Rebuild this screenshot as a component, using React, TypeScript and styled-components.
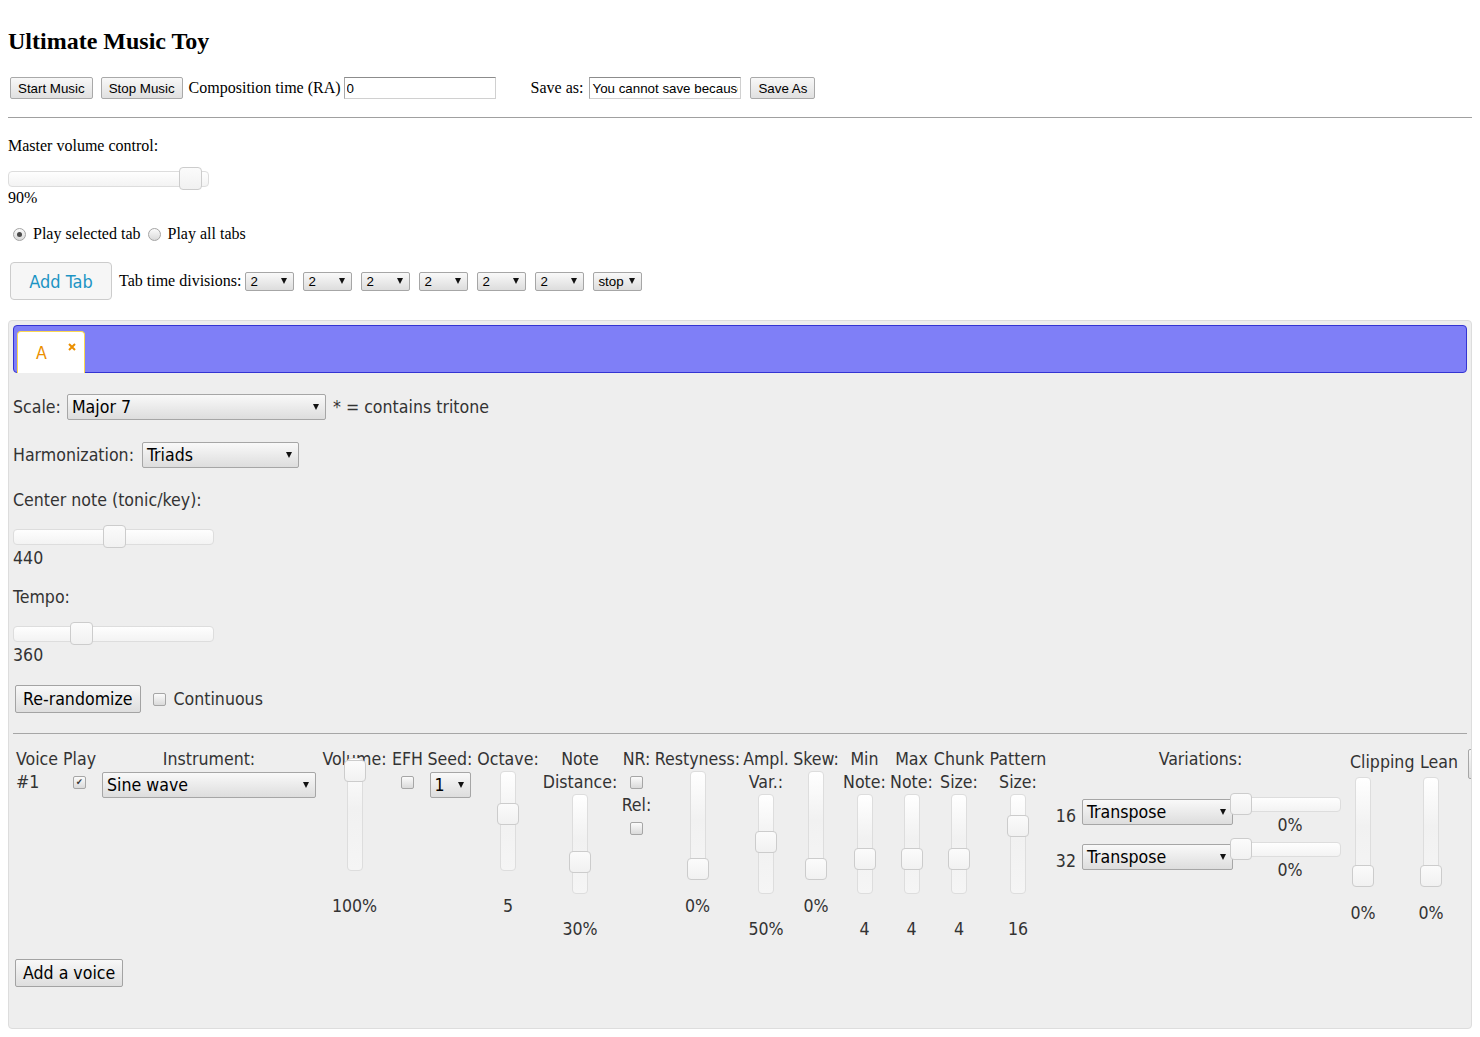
import React from "react";
import styled, { createGlobalStyle } from "styled-components";

const uiFont = `"DejaVu Sans Condensed", "DejaVu Sans", sans-serif`;
const sysFont = `"Liberation Sans", Arial, sans-serif`;

const GlobalStyle = createGlobalStyle`
  * { box-sizing: border-box; }
  body {
    margin: 0;
    background: #ffffff;
    color: #000000;
    font-family: "Liberation Serif", "Times New Roman", serif;
    font-size: 16px;
  }
`;

const Page = styled.div`
  padding: 27px 8px 8px;
`;

const Title = styled.h2`
  margin: 0;
  font-size: 24px;
  line-height: 28px;
  font-weight: bold;
`;

const Bar = styled.div<{ $mt: number; $h: number }>`
  display: flex;
  align-items: center;
  margin-top: ${(p) => p.$mt}px;
  height: ${(p) => p.$h}px;
  white-space: nowrap;
`;

const Text = styled.span<{ $ml?: number }>`
  margin-left: ${(p) => p.$ml ?? 0}px;
  flex-shrink: 0;
`;

const Line = styled.div<{ $mt?: number; $lh?: number }>`
  margin-top: ${(p) => p.$mt ?? 0}px;
  line-height: ${(p) => p.$lh ?? 23}px;
  white-space: nowrap;
`;

const SysButton = styled.button<{ $ml?: number }>`
  margin-left: ${(p) => p.$ml ?? 0}px;
  height: 22px;
  padding: 0 7px;
  font-family: ${sysFont};
  font-size: 13.33px;
  color: #000;
  background: linear-gradient(#f8f8f8, #e0e0e0);
  border: 1px solid #a9a9a9;
  border-radius: 2px;
  flex-shrink: 0;
`;

const TextBox = styled.input<{ $ml?: number }>`
  margin-left: ${(p) => p.$ml ?? 0}px;
  width: 152px;
  height: 22px;
  padding: 0 2px;
  font-family: ${sysFont};
  font-size: 13.33px;
  color: #000;
  background: #fff;
  border: 1px solid #d0d0d0;
  border-top-color: #8c8c8c;
  border-left-color: #a8a8a8;
  flex-shrink: 0;
`;

const Rule = styled.div<{ $mt: number }>`
  margin-top: ${(p) => p.$mt}px;
  height: 1px;
  background: #a0a0a0;
`;

const Radio = styled.span<{ $on?: boolean; $ml?: number }>`
  position: relative;
  display: inline-block;
  margin-left: ${(p) => p.$ml ?? 0}px;
  width: 13px;
  height: 13px;
  border-radius: 50%;
  border: 1px solid #a4a4a4;
  background: linear-gradient(#fbfbfb, #d9d9d9);
  flex-shrink: 0;
  &::after {
    content: "";
    display: ${(p) => (p.$on ? "block" : "none")};
    position: absolute;
    left: 3px;
    top: 3px;
    width: 5px;
    height: 5px;
    border-radius: 50%;
    background: #4a4a4a;
  }
`;

const Check = styled.span<{ $ml?: number }>`
  display: inline-flex;
  align-items: center;
  justify-content: center;
  margin-left: ${(p) => p.$ml ?? 0}px;
  width: 13px;
  height: 13px;
  border: 1px solid #a6a6a6;
  border-radius: 2px;
  background: linear-gradient(#fbfbfb, #dadada);
  font-family: "DejaVu Sans", sans-serif;
  font-size: 9px;
  line-height: 1;
  color: #333;
  vertical-align: middle;
  flex-shrink: 0;
`;

const Dropdown = styled.div<{
  $w: number;
  $h: number;
  $fs: number;
  $font: string;
  $ml?: number;
  $mt?: number;
}>`
  display: flex;
  align-items: center;
  justify-content: space-between;
  width: ${(p) => p.$w}px;
  height: ${(p) => p.$h}px;
  margin-left: ${(p) => p.$ml ?? 0}px;
  margin-top: ${(p) => p.$mt ?? 0}px;
  padding: 0 6px 0 4px;
  font-family: ${(p) => p.$font};
  font-size: ${(p) => p.$fs}px;
  color: #000;
  border: 1px solid #a6a6a6;
  border-radius: 2px;
  background: linear-gradient(#f9f9f9, #dddddd);
  white-space: nowrap;
  overflow: hidden;
  flex-shrink: 0;
  &::after {
    content: "";
    flex-shrink: 0;
    border-left: 3.5px solid transparent;
    border-right: 3.5px solid transparent;
    border-top: 6px solid #111;
  }
`;

const HTrack = styled.div<{ $w: number; $h: number; $mt?: number; $ml?: number }>`
  position: relative;
  width: ${(p) => p.$w}px;
  height: ${(p) => p.$h}px;
  margin-top: ${(p) => p.$mt ?? 0}px;
  margin-left: ${(p) => p.$ml ?? 0}px;
  border: 1px solid #dddddd;
  border-radius: 4px;
  background: linear-gradient(#fefefe, #f3f3f3);
  flex-shrink: 0;
`;

const VTrack = styled.div<{ $h: number; $mt: number }>`
  position: relative;
  width: 16px;
  height: ${(p) => p.$h}px;
  margin-top: ${(p) => p.$mt}px;
  border: 1px solid #dddddd;
  border-radius: 4px;
  background: linear-gradient(#ffffff, #f1f1f1 45%, #f5f5f5);
  flex-shrink: 0;
`;

const Knob = styled.span<{ $x: number; $y: number; $size: number }>`
  position: absolute;
  left: ${(p) => p.$x}px;
  top: ${(p) => p.$y}px;
  width: ${(p) => p.$size}px;
  height: ${(p) => p.$size}px;
  border: 1px solid #cccccc;
  border-radius: 4px;
  background: linear-gradient(#fbfbfb, #f1f1f1);
`;

const AddTabButton = styled.button`
  margin-left: 2px;
  width: 102px;
  height: 38px;
  font-family: ${uiFont};
  font-stretch: condensed;
  font-size: 18px;
  color: #1c94c4;
  background: #f6f6f6;
  border: 1px solid #cccccc;
  border-radius: 4px;
  flex-shrink: 0;
`;

const Tabs = styled.div`
  margin-top: 20px;
  padding: 4px 4px 41px;
  border: 1px solid #dddddd;
  border-radius: 4px;
  background: #eeeeee;
  color: #333333;
  font-family: ${uiFont};
  font-stretch: condensed;
  font-size: 17.6px;
  overflow: hidden;
`;

const TabNav = styled.div`
  display: flex;
  height: 48px;
  padding: 5px 3px 0;
  border: 1px solid #3434d2;
  border-radius: 4px;
  background: #7f7ff7;
`;

const Tab = styled.div`
  display: flex;
  align-items: center;
  width: 68px;
  height: 42px;
  padding-left: 18px;
  border: 1px solid #fbd850;
  border-bottom: 0;
  border-radius: 4px 4px 0 0;
  background: #ffffff;
  color: #eb8f00;
`;

const CloseIcon = styled.svg`
  margin-left: 21px;
  margin-bottom: 12px;
`;

const Row = styled.div<{ $mt: number; $h?: number }>`
  display: flex;
  align-items: center;
  margin-top: ${(p) => p.$mt}px;
  min-height: ${(p) => p.$h ?? 23}px;
  white-space: nowrap;
`;

const UiButton = styled.button<{ $ml?: number; $mt?: number }>`
  margin-left: ${(p) => p.$ml ?? 2}px;
  margin-top: ${(p) => p.$mt ?? 0}px;
  height: 28px;
  padding: 0 7px;
  font-family: ${uiFont};
  font-stretch: condensed;
  font-size: 17.6px;
  color: #000;
  border: 1px solid #a3a3a3;
  border-radius: 2px;
  background: linear-gradient(#f8f8f8, #dedede);
  flex-shrink: 0;
  white-space: nowrap;
`;

const PanelRule = styled.div`
  margin-top: 20px;
  height: 1px;
  background: #a6a6a6;
`;

const VoiceRow = styled.div`
  display: flex;
  align-items: flex-start;
  gap: 4px;
  margin-top: 14px;
  padding-left: 3px;
`;

const Col = styled.div<{ $w: number; $align?: string; $pt?: number }>`
  display: flex;
  flex-direction: column;
  align-items: ${(p) => p.$align ?? "center"};
  width: ${(p) => p.$w}px;
  padding-top: ${(p) => p.$pt ?? 0}px;
  flex-shrink: 0;
  text-align: center;
`;

const Stack = styled.div<{ $w?: number; $ml?: number }>`
  display: flex;
  flex-direction: column;
  align-items: center;
  width: ${(p) => (p.$w ? `${p.$w}px` : "100%")};
  margin-left: ${(p) => p.$ml ?? 0}px;
`;

const CheckLine = styled.div`
  display: flex;
  align-items: center;
  justify-content: center;
  height: 23px;
`;

const VarList = styled.div`
  display: flex;
  flex-direction: column;
  width: 100%;
  margin-top: 22px;
`;

const VarRow = styled.div`
  display: flex;
  align-items: flex-start;
  height: 45px;
`;

const VarNum = styled.div`
  width: 24px;
  padding-right: 3px;
  margin-top: 11.5px;
  line-height: 23px;
  text-align: right;
  flex-shrink: 0;
`;

const VarSlider = styled.div`
  display: flex;
  flex-direction: column;
  width: 112px;
  margin-left: -3px;
  flex-shrink: 0;
`;

const VarValue = styled.div`
  margin-top: 1.5px;
  padding-left: 8px;
  line-height: 23px;
  text-align: center;
`;

const EdgeButton = styled.button`
  margin-left: 4px;
  margin-top: 1px;
  width: 60px;
  height: 30px;
  border: 1px solid #a6a6a6;
  border-radius: 2px;
  background: linear-gradient(#f8f8f8, #dedede);
  flex-shrink: 0;
`;

const ROW_TOP = 748;

type SliderProps = {
  w: number;
  label: string[];
  top: number;
  h: number;
  knob: number;
  value: string;
  vy: number;
  pt?: number;
  stackW?: number;
  stackMl?: number;
};

const SliderCell = ({ w, label, top, h, knob, value, vy, pt = 0, stackW, stackMl }: SliderProps) => (
  <Col $w={w} $pt={pt} $align={stackW ? "flex-start" : "center"}>
    {label.map((l) => (
      <Line key={l}>{l}</Line>
    ))}
    <Stack $w={stackW} $ml={stackMl}>
      <VTrack $h={h} $mt={top - ROW_TOP - pt - 23 * label.length}>
        <Knob $x={-4} $y={knob - top - 1} $size={22} />
      </VTrack>
      <Line $mt={vy - 11.5 - top - h}>{value}</Line>
    </Stack>
  </Col>
);

const Variation = ({ n }: { n: string }) => (
  <VarRow>
    <VarNum>{n}</VarNum>
    <Dropdown $w={151} $h={26} $fs={17.6} $font={uiFont} $ml={3} $mt={6}>
      Transpose
    </Dropdown>
    <VarSlider>
      <HTrack $w={109} $h={15} $mt={4} $ml={2}>
        <Knob $x={-3} $y={-5} $size={22} />
      </HTrack>
      <VarValue>0%</VarValue>
    </VarSlider>
  </VarRow>
);

const divisions = ["2", "2", "2", "2", "2", "2", "stop"];

export default function App() {
  return (
    <Page>
      <GlobalStyle />
      <Title>Ultimate Music Toy</Title>

      <Bar $mt={22} $h={22}>
        <SysButton $ml={2}>Start Music</SysButton>
        <SysButton $ml={8}>Stop Music</SysButton>
        <Text $ml={6}>Composition time (RA)</Text>
        <TextBox $ml={3} defaultValue="0" />
        <Text $ml={35}>Save as:</Text>
        <TextBox $ml={6} defaultValue="You cannot save because you are not logged in" />
        <SysButton $ml={9}>Save As</SysButton>
      </Bar>

      <Rule $mt={18} />

      <Line $mt={19} $lh={18}>
        Master volume control:
      </Line>
      <HTrack $w={201} $h={16} $mt={16}>
        <Knob $x={170} $y={-5} $size={23} />
      </HTrack>
      <Line $mt={2} $lh={18}>
        90%
      </Line>

      <Bar $mt={18} $h={18}>
        <Radio $on $ml={5} />
        <Text $ml={7}>Play selected tab</Text>
        <Radio $ml={7} />
        <Text $ml={7}>Play all tabs</Text>
      </Bar>

      <Bar $mt={19} $h={38}>
        <AddTabButton>Add Tab</AddTabButton>
        <Text $ml={7}>Tab time divisions:</Text>
        {divisions.map((d, i) => (
          <Dropdown key={i} $w={49} $h={19} $fs={13.33} $font={sysFont} $ml={i === 0 ? 4 : 9}>
            {d}
          </Dropdown>
        ))}
      </Bar>

      <Tabs>
        <TabNav>
          <Tab>
            <span>A</span>
            <CloseIcon width="8" height="8" viewBox="0 0 8 8">
              <path d="M1 1 L7 7 M7 1 L1 7" stroke="#eb8f00" strokeWidth="2" />
            </CloseIcon>
          </Tab>
        </TabNav>

        <Row $mt={21} $h={26}>
          <Text>Scale:</Text>
          <Dropdown $w={259} $h={26} $fs={17.6} $font={uiFont} $ml={6}>
            Major 7
          </Dropdown>
          <Text $ml={7}>* = contains tritone</Text>
        </Row>

        <Row $mt={22} $h={26}>
          <Text>Harmonization:</Text>
          <Dropdown $w={157} $h={26} $fs={17.6} $font={uiFont} $ml={8}>
            Triads
          </Dropdown>
        </Row>

        <Line $mt={20.5}>Center note (tonic/key):</Line>
        <HTrack $w={201} $h={16} $mt={17.5}>
          <Knob $x={89} $y={-5} $size={23} />
        </HTrack>
        <Line $mt={1.5}>440</Line>

        <Line $mt={16}>Tempo:</Line>
        <HTrack $w={201} $h={16} $mt={17.5}>
          <Knob $x={56} $y={-5} $size={23} />
        </HTrack>
        <Line $mt={1.5}>360</Line>

        <Row $mt={18.5} $h={28}>
          <UiButton>Re-randomize</UiButton>
          <Check $ml={12} />
          <Text $ml={8}>Continuous</Text>
        </Row>

        <PanelRule />

        <VoiceRow>
          <Col $w={42} $align="flex-start">
            <Line>Voice</Line>
            <Line>#1</Line>
          </Col>
          <Col $w={35}>
            <Line>Play</Line>
            <CheckLine>
              <Check>✔</Check>
            </CheckLine>
          </Col>
          <Col $w={216}>
            <Line>Instrument:</Line>
            <Dropdown $w={214} $h={26} $fs={17.6} $font={uiFont} $mt={1}>
              Sine wave
            </Dropdown>
          </Col>
          <SliderCell w={67} label={["Volume:"]} top={758} h={113} knob={760} value="100%" vy={906} />
          <Col $w={31}>
            <Line>EFH</Line>
            <CheckLine>
              <Check />
            </CheckLine>
          </Col>
          <Col $w={46}>
            <Line>Seed:</Line>
            <Dropdown $w={41} $h={26} $fs={17.6} $font={uiFont} $mt={1}>
              1
            </Dropdown>
          </Col>
          <SliderCell w={62} label={["Octave:"]} top={771} h={100} knob={803} value="5" vy={906} />
          <SliderCell w={74} label={["Note", "Distance:"]} top={794} h={100} knob={851} value="30%" vy={929} />
          <Col $w={31}>
            <Line>NR:</Line>
            <CheckLine>
              <Check />
            </CheckLine>
            <Line>Rel:</Line>
            <CheckLine>
              <Check />
            </CheckLine>
          </Col>
          <SliderCell w={83} label={["Restyness:"]} top={771} h={108} knob={858} value="0%" vy={906} />
          <SliderCell w={46} label={["Ampl.", "Var.:"]} top={794} h={100} knob={831} value="50%" vy={929} />
          <SliderCell w={46} label={["Skew:"]} top={771} h={108} knob={858} value="0%" vy={906} />
          <SliderCell w={43} label={["Min", "Note:"]} top={794} h={100} knob={848} value="4" vy={929} />
          <SliderCell w={43} label={["Max", "Note:"]} top={794} h={100} knob={848} value="4" vy={929} />
          <SliderCell w={44} label={["Chunk", "Size:"]} top={794} h={100} knob={848} value="4" vy={929} />
          <SliderCell w={66} label={["Pattern", "Size:"]} top={794} h={100} knob={815} value="16" vy={929} />
          <Col $w={291}>
            <Line>Variations:</Line>
            <VarList>
              <Variation n="16" />
              <Variation n="32" />
            </VarList>
          </Col>
          <SliderCell
            w={66}
            pt={3}
            label={["Clipping"]}
            top={777}
            h={110}
            knob={865}
            value="0%"
            vy={913}
            stackW={22}
            stackMl={2}
          />
          <SliderCell
            w={40}
            pt={3}
            label={["Lean"]}
            top={777}
            h={110}
            knob={865}
            value="0%"
            vy={913}
            stackW={22}
            stackMl={0}
          />
          <EdgeButton aria-label="Remove voice" />
        </VoiceRow>

        <UiButton $mt={18.5}>Add a voice</UiButton>
      </Tabs>
    </Page>
  );
}
